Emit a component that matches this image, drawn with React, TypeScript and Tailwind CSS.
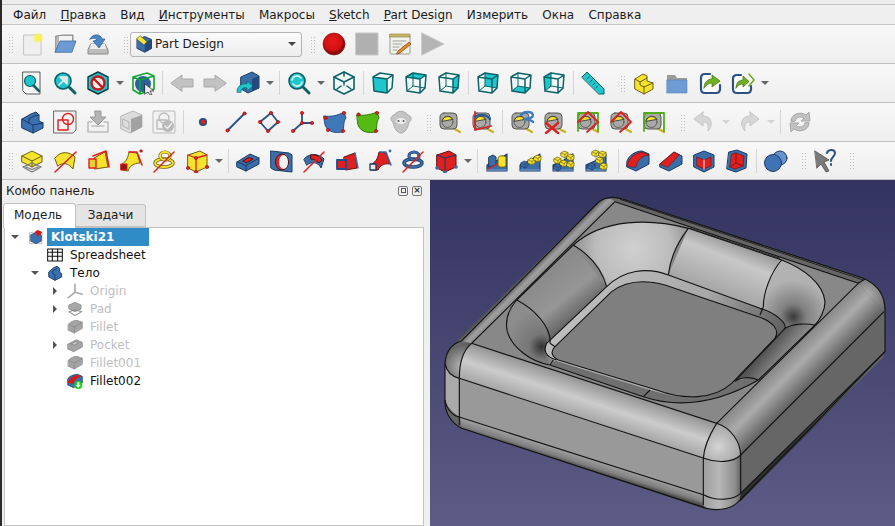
import type { ReactNode } from "react";

const BLUE = "#3a6ea8";
const BLUE_D = "#1c3a66";
const YEL = "#f5e32e";
const YEL_D = "#6b5f10";
const RED = "#e01f1f";
const TEAL = "#1fc6ce";
const TEAL_D = "#0c6266";

function Svg({ children, size = 24 }: { children: ReactNode; size?: number }) {
  return (
    <svg width={size} height={size} viewBox="0 0 24 24" strokeLinejoin="round" strokeLinecap="round">
      {children}
    </svg>
  );
}

const FACES: Record<string, string> = {
  front: "M2 6 L16 8 L16 22 L3 20 Z",
  top: "M2 6 L9 2 L22 4 L16 8 Z",
  right: "M16 8 L22 4 L21 17 L16 22 Z",
  rear: "M9 2 L22 4 L21 17 L9 15 Z",
  bottom: "M3 20 L9 15 L21 17 L16 22 Z",
  left: "M2 6 L9 2 L9 15 L3 20 Z",
};

// small wire box used by the standard views, "face" picks the filled side
function ViewCube({ face }: { face: string }) {
  const s = { stroke: TEAL_D, strokeWidth: 1.5, fill: "none" };
  if (face === "iso") {
    return (
      <Svg>
        <path d="M12 1 L22 6 L22 18 L12 23 L2 18 L2 6 Z" fill="#f4fbfb" stroke={TEAL_D} strokeWidth={1.6} />
        <path d="M2 6 L12 11 L22 6 M12 1 V5 M12 11 V14 M5 18 L9 15 M19 18 L15 15" fill="none" stroke={TEAL_D} strokeWidth={1.5} />
      </Svg>
    );
  }
  return (
    <Svg>
      <path d="M2 6 L9 2 L22 4 L21 17 L16 22 L3 20 Z" fill="#f1f9f9" stroke="none" />
      <path d={FACES[face]} fill={TEAL} />
      <path d="M2 6 L9 2 L22 4 L21 17 L16 22 L3 20 Z M2 6 L16 8 L22 4 M16 8 V22" {...s} />
      {face !== "front" && <path d="M9 2 V15 L3 20 M9 15 L21 17" {...s} strokeWidth={1} />}
    </Svg>
  );
}

function Glass({ children }: { children?: ReactNode }) {
  return (
    <Svg>
      <path d="M15 15 L22 22" stroke={TEAL_D} strokeWidth={3} />
      <circle cx="10" cy="10" r="8" fill={TEAL} stroke={TEAL_D} strokeWidth={1.6} />
      {children}
    </Svg>
  );
}

function Tape({ children }: { children?: ReactNode }) {
  return (
    <Svg>
      <path d="M15 18 L22 22" stroke="#c9b320" strokeWidth={2.4} />
      <rect x="2" y="3" width="17" height="16" rx="4" fill="#a9a9a6" stroke="#555" strokeWidth={1} />
      <path d="M4 11 A6 6 0 0 1 15 9 Z" fill={YEL} stroke="#333" strokeWidth={0.8} />
      <circle cx="9.5" cy="12" r="5.5" fill="none" stroke="#444" strokeWidth={0.7} />
      {children}
    </Svg>
  );
}

function SheetPart({ children }: { children: ReactNode }) {
  return (
    <Svg>
      <path d="M2 16 L13 11 L22 5 L22 22 L2 22 Z" fill={BLUE} stroke={BLUE_D} strokeWidth={1.1} />
      <path d="M2 21 L22 21" stroke="#7fa4cf" strokeWidth={1} />
      {children}
    </Svg>
  );
}

function Cube2({ x, y, f = YEL, d = YEL_D }: { x: number; y: number; f?: string; d?: string }) {
  return (
    <g transform={`translate(${x} ${y})`}>
      <path d="M0 2 L3 0 L7 1.5 L7 5 L4 7 L0 5 Z" fill={f} stroke={d} strokeWidth={0.7} />
      <path d="M0 2 L4 3.5 L7 1.5 M4 3.5 L4 7" fill="none" stroke={d} strokeWidth={0.6} />
    </g>
  );
}

const redDot = (cx: number, cy: number, r = 1.7) => <circle cx={cx} cy={cy} r={r} fill={RED} stroke="#8a1010" strokeWidth={0.5} />;

const ICONS: Record<string, ReactNode> = {
  new: (
    <Svg>
      <defs>
        <radialGradient id="glow"><stop offset="0.35" stopColor="#fdf24a" /><stop offset="1" stopColor="#fdf24a" stopOpacity="0" /></radialGradient>
      </defs>
      <rect x="4" y="3" width="17" height="20" fill="#efefef" stroke="#c4c4c4" />
      <circle cx="18" cy="6" r="6" fill="url(#glow)" />
    </Svg>
  ),
  open: (
    <Svg>
      <path d="M3 4 L10 3 L20 3 L20 11 L3 20 Z" fill="#b9b9b7" stroke="#666" strokeWidth={0.7} />
      <rect x="6" y="4" width="13" height="8" fill="#f2f2f2" />
      <path d="M2 20 L7 9 L23 9 L19 20 Z" fill="#6a9bd6" stroke="#44699b" strokeWidth={0.8} />
    </Svg>
  ),
  save: (
    <Svg>
      <path d="M5 12 L19 12 L22 18 L22 22 L2 22 L2 18 Z" fill="#bdbdbb" stroke="#8a8a8a" />
      <path d="M5 12 L19 12 L20 17 L4 17 Z" fill="#ececec" />
      <path d="M4 7 C7 1 15 2 16 7 L19 7 L13 16 L7 9 L11 8 C10 6 7 6 4 7 Z" fill="#4a86c4" stroke="#28598f" strokeWidth={0.7} />
    </Svg>
  ),
  wb: (
    <Svg size={18}>
      <path d="M3 6 L13 2 L22 6 L22 18 L13 23 L3 18 Z" fill={BLUE} stroke={BLUE_D} strokeWidth={1.2} />
      <path d="M13 10 L22 6 L22 18 L13 23 Z" fill="#23497d" />
      <path d="M2 5 L7 1 L16 9 L12 13 Z" fill={YEL} stroke="#444" strokeWidth={0.8} />
    </Svg>
  ),
  record: (
    <Svg>
      <defs>
        <radialGradient id="rec" cx="0.45" cy="0.4"><stop offset="0" stopColor="#e81c1c" /><stop offset="0.8" stopColor="#d10f0f" /><stop offset="1" stopColor="#8e0a0a" /></radialGradient>
      </defs>
      <circle cx="12" cy="12" r="11" fill="url(#rec)" stroke="#8a1111" strokeWidth={0.6} />
    </Svg>
  ),
  stop: (
    <Svg>
      <rect x="1" y="1" width="22" height="22" fill="#b0b0b0" stroke="#c8c8c8" strokeWidth={1} />
    </Svg>
  ),
  macro: (
    <Svg>
      <rect x="2" y="3" width="20" height="19" rx="1" fill="#f3f3ee" stroke="#9a9a90" />
      <rect x="2" y="2" width="20" height="3" fill="#c8b56a" stroke="#8a7b3c" strokeWidth={0.6} />
      <path d="M5 9 H18 M5 12 H14 M5 15 H11 M5 18 H9" stroke="#9c9c9c" strokeWidth={1} />
      <path d="M10 19 L21 10 L23 12 L12 21 L9 22 Z" fill="#e58a22" stroke="#7a4110" strokeWidth={0.7} />
    </Svg>
  ),
  play: (
    <Svg>
      <path d="M1 1 L23 12 L1 23 Z" fill="#b4b4b4" stroke="#c8c8c8" strokeWidth={1} />
    </Svg>
  ),
  fitall: (
    <Svg>
      <path d="M3 1 H20 V23 H6 L3 20 Z" fill="#f6f6f6" stroke="#333" strokeWidth={0.8} />
      <path d="M13 14 L19 20" stroke={TEAL_D} strokeWidth={2.6} />
      <circle cx="10" cy="10" r="5.5" fill={TEAL} stroke={TEAL_D} strokeWidth={1.2} />
    </Svg>
  ),
  fitsel: (
    <Glass>
      <path d="M6 14 L11 9 M7 6 L14 6 L14 13 Z" stroke="#eee" strokeWidth={1.6} fill="#ddd" />
    </Glass>
  ),
  style: (
    <Svg>
      <path d="M12 1 L22 6 L22 18 L12 23 L2 18 L2 6 Z" fill={TEAL} stroke="#0b3c40" strokeWidth={1.4} />
      <circle cx="12" cy="12" r="6.5" fill="#eee" stroke="#c31919" strokeWidth={2.4} />
      <path d="M7.5 7.5 L16.5 16.5" stroke="#c31919" strokeWidth={2.4} />
    </Svg>
  ),
  bbox: (
    <Svg>
      <circle cx="12" cy="13" r="8" fill="#2e5f9e" />
      <path d="M2 6 L16 2 L23 5 L23 18 L9 23 L2 19 Z M2 6 L9 9 L23 5 M9 9 V23" fill="none" stroke="#11a531" strokeWidth={1.6} />
      <path d="M14 13 L23 20 L19 20 L21 24 L19 24 L17 21 L14 23 Z" fill="#eee" stroke="#222" strokeWidth={0.7} />
    </Svg>
  ),
  back: (
    <Svg>
      <path d="M1 12 L12 4 L12 8 L23 8 L23 16 L12 16 L12 20 Z" fill="#c2c2c2" stroke="#a9a9a9" />
    </Svg>
  ),
  fwd: (
    <Svg>
      <path d="M23 12 L12 4 L12 8 L1 8 L1 16 L12 16 L12 20 Z" fill="#c2c2c2" stroke="#a9a9a9" />
    </Svg>
  ),
  syncview: (
    <Svg>
      <path d="M5 6 L16 1 L23 5 L23 17 L12 22 L5 18 Z" fill={BLUE} stroke={BLUE_D} />
      <path d="M16 8 L23 5 L23 17 L16 20 Z" fill="#23497d" />
      <path d="M1 21 C1 14 7 12 11 13 L11 10 L17 15 L11 20 L11 17 C7 16 5 18 5 21 Z" fill={TEAL} stroke={TEAL_D} strokeWidth={0.7} />
    </Svg>
  ),
  zoomrot: (
    <Glass>
      <path d="M5 9 A5 5 0 0 1 14 7 M15 11 A5 5 0 0 1 6 13" fill="none" stroke="#d8f3f4" strokeWidth={1.6} />
    </Glass>
  ),
  ruler: (
    <Svg>
      <path d="M1 6 L6 1 L23 18 L23 23 L18 23 Z" fill={TEAL} stroke={TEAL_D} />
      <path d="M6 8 L8 6 M9 11 L11 9 M12 14 L14 12 M15 17 L17 15" stroke={TEAL_D} />
    </Svg>
  ),
  yellowstep: (
    <Svg>
      <path d="M3 8 L11 3 L15 5 L15 10 L21 12 L21 18 L12 23 L3 18 Z" fill={YEL} stroke={YEL_D} />
      <path d="M3 8 L8 11 L15 7 M8 11 V14 L12 16 L21 12 M12 16 V23" fill="none" stroke={YEL_D} />
    </Svg>
  ),
  folder: (
    <Svg>
      <path d="M2 4 H10 L12 7 H22 V21 H2 Z" fill="#9a9a98" />
      <rect x="2" y="9" width="20" height="13" fill="#6e9bd3" stroke="#5a86bb" strokeWidth={0.6} />
    </Svg>
  ),
  link: (
    <Svg>
      <path d="M12 3 H7 Q3 3 3 7 V18 Q3 22 7 22 H18 Q22 22 22 18 V14" fill="#fff" stroke="#2a5285" strokeWidth={2.2} />
      <path d="M6 17 C6 11 10 8 14 8 L14 4 L22 10 L14 16 L14 12 C11 12 8 14 6 17 Z" fill="#6fb021" stroke="#3f6e10" strokeWidth={0.7} />
    </Svg>
  ),
  linkmore: (
    <Svg>
      <path d="M10 4 H6 Q2 4 2 8 V18 Q2 22 6 22 H16 Q20 22 20 18 V15" fill="#fff" stroke="#2a5285" strokeWidth={2.2} />
      <path d="M5 17 C5 12 8 9 12 9 L12 5 L18 10.5 L12 16 L12 13 C9 13 7 14 5 17 Z" fill="#6fb021" stroke="#3f6e10" strokeWidth={0.7} />
      <path d="M18 3 L23 9 L18 15" fill="none" stroke="#6fb021" strokeWidth={1.6} />
    </Svg>
  ),
  body: (
    <Svg>
      <path d="M2 9 L11 4 L16 2 L19 5 L19 11 L23 13 L23 18 L13 23 L2 18 Z" fill="#3a6fb0" stroke={BLUE_D} />
      <path d="M2 9 L9 13 L9 9 L14 6 L19 5 M9 13 L13 15 V23 M13 15 L23 13" fill="none" stroke={BLUE_D} />
    </Svg>
  ),
  sketch: (
    <Svg>
      <path d="M1 1 H23 V20 L20 23 H1 Z" fill="#f4f4f4" stroke="#444" strokeWidth={0.8} />
      <rect x="5" y="10" width="10" height="10" fill="none" stroke={RED} strokeWidth={1.4} />
      <circle cx="15" cy="9" r="5.5" fill="none" stroke={RED} strokeWidth={1.4} />
    </Svg>
  ),
  attach: (
    <Svg>
      <path d="M9 1 H15 V7 H20 L12 15 L4 7 H9 Z" fill="#b4b4b4" stroke="#999" />
      <path d="M2 12 H6 M18 12 H22 V22 H2 V12 M6 16 H18" fill="none" stroke="#bdbdbd" strokeWidth={1.6} />
    </Svg>
  ),
  graycube: (
    <Svg>
      <path d="M2 6 L14 1 L23 5 L23 17 L11 23 L2 19 Z" fill="#dcdcdc" stroke="#b9b9b9" />
      <path d="M12 9 L23 5 L23 17 L12 23 Z" fill="#a2a2a2" />
      <path d="M4 9 L10 12 L10 19 L4 16 Z" fill="none" stroke="#b2b2b2" />
    </Svg>
  ),
  graylock: (
    <Svg>
      <rect x="1" y="1" width="22" height="22" rx="1" fill="#f2f2f2" stroke="#bbb" />
      <circle cx="12" cy="8" r="5" fill="none" stroke="#bbb" strokeWidth={1.4} />
      <rect x="5" y="10" width="10" height="9" fill="none" stroke="#bbb" strokeWidth={1.4} />
      <circle cx="16" cy="16" r="6" fill="#b9b9b9" />
      <path d="M13 16 L15.5 18.5 L19.5 13.5" fill="none" stroke="#eee" strokeWidth={1.4} />
    </Svg>
  ),
  point: (
    <Svg>
      <circle cx="12" cy="12" r="3.2" fill={RED} stroke="#234e86" strokeWidth={1.8} />
    </Svg>
  ),
  line: (
    <Svg>
      <path d="M3 21 L21 3" stroke="#2a5285" strokeWidth={2} />
      {redDot(3.5, 20.5)}
      {redDot(20.5, 3.5)}
    </Svg>
  ),
  rect: (
    <Svg>
      <path d="M3 12 L11 21 L21 12 L14 3 Z" fill="none" stroke="#2a5285" strokeWidth={1.8} />
      {[[3, 12], [11, 21], [21, 12], [14, 3]].map(([x, y]) => <g key={x}>{redDot(x, y)}</g>)}
    </Svg>
  ),
  axes: (
    <Svg>
      <path d="M12 3 V13 L3 21 M12 13 L22 13" fill="none" stroke="#2a5285" strokeWidth={1.8} />
      {[[12, 3], [12, 13], [3, 21], [22, 13]].map(([x, y]) => <g key={y + x}>{redDot(x, y)}</g>)}
    </Svg>
  ),
  plane: (
    <Svg>
      <path d="M1 6 C7 7 14 6 21 2 L23 8 C20 12 21 18 20 22 C13 23 5 23 2 15 Z" fill="#3f78b8" stroke="#2a5285" />
      {redDot(2.5, 8)}
      {redDot(21, 3)}
      {redDot(20, 21)}
      {redDot(5, 20)}
    </Svg>
  ),
  planegreen: (
    <Svg>
      <path d="M1 5 C7 6 14 5 21 2 L23 8 C20 12 21 18 20 22 C13 23 5 23 2 15 Z" fill="#55bb12" stroke="#2d7b06" />
      {redDot(2.5, 4.5)}
      {redDot(21, 3)}
      {redDot(20, 21)}
    </Svg>
  ),
  sheep: (
    <Svg>
      <path d="M5 5 C9 0 15 0 19 5 C23 6 23 11 20 12 C19 18 16 23 12 23 C8 23 5 18 4 12 C1 11 1 6 5 5 Z" fill="#c4c4c4" stroke="#aaa" />
      <ellipse cx="12" cy="11" rx="5" ry="3" fill="#eeeeee" />
      <circle cx="9.5" cy="11" r="1" fill="#555" />
      <circle cx="14.5" cy="11" r="1" fill="#555" />
    </Svg>
  ),
  tape0: <Tape />,
  tape1: (
    <Tape>
      <path d="M4 2 V20 L20 16" fill="none" stroke={RED} strokeWidth={1.8} />
      <path d="M4 7 A10 9 0 0 1 19 9" fill="none" stroke="#2a5c9c" strokeWidth={2.2} />
    </Tape>
  ),
  tape2: (
    <Tape>
      <path d="M11 5 C14 1 22 1 23 5 C23 9 18 8 15 9 C18 10 22 10 23 12" fill="none" stroke="#3d7cc0" strokeWidth={2.4} />
    </Tape>
  ),
  tape3: (
    <Tape>
      <path d="M3 13 L15 23 M15 13 L3 23" stroke={RED} strokeWidth={2.4} />
    </Tape>
  ),
  tape4: (
    <Tape>
      <path d="M2 21 V3 H22 V21" fill="none" stroke="#4eae1a" strokeWidth={1.8} />
      <path d="M2 12 L12 2 L22 12 L11 22" fill="none" stroke={RED} strokeWidth={1.8} />
    </Tape>
  ),
  tape5: (
    <Tape>
      <path d="M2 12 L12 2 L22 12 L11 22" fill="none" stroke={RED} strokeWidth={1.8} />
    </Tape>
  ),
  tape6: (
    <Tape>
      <path d="M2 21 V3 H22 V21" fill="none" stroke="#4eae1a" strokeWidth={1.8} />
    </Tape>
  ),
  undo: (
    <Svg>
      <path d="M11 2 L2 9 L11 16 L11 12 C15 12 17 14 16 21 C21 16 21 6 11 6 Z" fill="#d6d6d6" stroke="#c6c6c6" />
    </Svg>
  ),
  redo: (
    <Svg>
      <path d="M13 2 L22 9 L13 16 L13 12 C9 12 7 14 8 21 C3 16 3 6 13 6 Z" fill="#d6d6d6" stroke="#c6c6c6" />
    </Svg>
  ),
  refresh: (
    <Svg>
      <path d="M3 11 C3 4 12 1 18 5 L21 2 L22 11 L13 11 L16 8 C12 6 8 7 7 11 Z" fill="#c2c2c2" stroke="#a8a8a8" />
      <path d="M21 13 C21 20 12 23 6 19 L3 22 L2 13 L11 13 L8 16 C12 18 16 17 17 13 Z" fill="#c2c2c2" stroke="#a8a8a8" />
    </Svg>
  ),
  pad: (
    <Svg>
      <path d="M2 7 L12 2 L22 7 L22 13 L12 18 L2 13 Z" fill={YEL} stroke={YEL_D} />
      <path d="M2 7 L12 12 L22 7 M12 12 V18" fill="none" stroke={YEL_D} />
      <path d="M3 18 L12 14 L21 18 L12 23 Z M6 18 L12 20.5 L18 18" fill="none" stroke="#777" strokeWidth={1.2} />
    </Svg>
  ),
  rev: (
    <Svg>
      <path d="M2 9 C8 1 17 3 22 8 L20 20 C16 14 9 13 5 17 Z" fill={YEL} stroke={YEL_D} />
      <path d="M2 23 L23 3" stroke={RED} strokeWidth={1.5} />
    </Svg>
  ),
  loft: (
    <Svg>
      <path d="M8 9 L19 3 L22 18 L9 20 Z" fill={YEL} stroke={YEL_D} />
      <path d="M7 7 L20 2 L23 18" fill="none" stroke={RED} strokeWidth={1.6} />
      <rect x="3" y="10" width="7" height="9" fill="#e8d033" stroke={RED} strokeWidth={1.4} />
    </Svg>
  ),
  pipe: (
    <Svg>
      <path d="M3 15 C8 12 9 8 10 3 L18 4 L21 14 C14 14 10 18 9 22 L3 21 Z" fill={YEL} stroke={YEL_D} />
      <path d="M10 3 L18 3 L23 16" fill="none" stroke={RED} strokeWidth={1.5} />
      <rect x="2" y="15" width="6" height="6" fill="#8a1a1a" stroke={RED} />
      {redDot(22, 2, 1.3)}
    </Svg>
  ),
  helix: (
    <Svg>
      <ellipse cx="12" cy="14" rx="9" ry="4" fill="none" stroke={YEL_D} strokeWidth={3.4} />
      <ellipse cx="12" cy="14" rx="9" ry="4" fill="none" stroke={YEL} strokeWidth={2} />
      <ellipse cx="13" cy="7" rx="5" ry="4" fill="none" stroke={YEL_D} strokeWidth={3.2} />
      <ellipse cx="13" cy="7" rx="5" ry="4" fill="none" stroke={YEL} strokeWidth={2} />
      <path d="M2 23 L22 3" stroke={RED} strokeWidth={1.5} />
    </Svg>
  ),
  prim: (
    <Svg>
      <path d="M3 6 L15 2 L22 6 L22 18 L11 23 L3 19 Z" fill={YEL} stroke={YEL_D} />
      <path d="M11 9 L11 23 M3 6 L11 9 L22 6" fill="none" stroke={RED} strokeWidth={1.3} />
      {redDot(11, 9)}
      {redDot(3, 19)}
      {redDot(11, 23)}
      {redDot(22, 18)}
    </Svg>
  ),
  pocket: (
    <Svg>
      <path d="M1 13 L14 5 L23 9 L23 15 L10 22 L1 18 Z" fill={BLUE} stroke={BLUE_D} />
      <path d="M1 13 L10 16.5 L23 9 M10 16.5 V22" fill="none" stroke={BLUE_D} />
      <path d="M7 12 L13 8.5 L17 10 L11 13.5 Z" fill={RED} stroke="#5b0d0d" />
    </Svg>
  ),
  hole: (
    <Svg>
      <path d="M2 2 L20 4 L23 6 L23 23 L5 21 L2 19 Z" fill={BLUE} stroke={BLUE_D} />
      <ellipse cx="13" cy="13" rx="6.5" ry="8" fill="#d9262c" stroke="#5b0d0d" />
      <ellipse cx="14.5" cy="13" rx="4.5" ry="7" fill="#f4f4f4" />
    </Svg>
  ),
  groove: (
    <Svg>
      <path d="M2 10 C8 3 17 5 22 10 L19 19 C16 13 10 12 5 16 Z" fill={BLUE} stroke={BLUE_D} />
      <path d="M9 6 C13 5 17 7 20 11 L17 14 C14 11 12 10 9 10 Z" fill={RED} stroke="#5b0d0d" />
      <path d="M2 23 L22 3" stroke={RED} strokeWidth={1.5} />
    </Svg>
  ),
  subloft: (
    <Svg>
      <path d="M9 8 L20 4 L22 19 L11 21 Z" fill={RED} stroke="#6b0e0e" />
      <rect x="2" y="11" width="9" height="9" fill={RED} stroke="#1e4c8c" strokeWidth={1.8} />
      <path d="M20 4 L23 19" stroke={BLUE} strokeWidth={1.5} />
    </Svg>
  ),
  subpipe: (
    <Svg>
      <path d="M4 15 C9 12 10 8 11 3 L18 4 L22 15 C15 14 12 17 10 21 L4 21 Z" fill={RED} stroke="#6b0e0e" />
      <path d="M12 3 L18 3 L23 16" fill="none" stroke={BLUE} strokeWidth={1.5} />
      <rect x="2" y="15" width="6" height="6" fill="#e8e8e8" stroke={BLUE_D} strokeWidth={1.3} />
      <circle cx="22" cy="2" r="1.4" fill={BLUE} />
    </Svg>
  ),
  subhelix: (
    <Svg>
      <ellipse cx="12" cy="14" rx="9" ry="4" fill="none" stroke={BLUE_D} strokeWidth={3.4} />
      <ellipse cx="12" cy="14" rx="9" ry="4" fill="none" stroke={BLUE} strokeWidth={2} />
      <ellipse cx="13" cy="7" rx="5" ry="4" fill="none" stroke={BLUE_D} strokeWidth={3.2} />
      <ellipse cx="13" cy="7" rx="5" ry="4" fill="none" stroke={BLUE} strokeWidth={2} />
      <path d="M2 23 L22 3" stroke={RED} strokeWidth={1.5} />
    </Svg>
  ),
  subprim: (
    <Svg>
      <path d="M3 6 L15 2 L22 6 L22 18 L11 23 L3 19 Z" fill={RED} stroke="#6b0e0e" />
      <path d="M11 9 L11 23 M3 6 L11 9 L22 6" fill="none" stroke={BLUE_D} strokeWidth={1.1} />
      <circle cx="3" cy="19" r="1.8" fill={BLUE} />
      <circle cx="11" cy="23" r="1.8" fill={BLUE} />
      <circle cx="22" cy="18" r="1.8" fill={BLUE} />
    </Svg>
  ),
  mirror: (
    <SheetPart>
      <path d="M4 8 L8 6 L11 8 V16 L4 18 Z" fill={BLUE} stroke={BLUE_D} />
      <path d="M13 9 C13 6 21 6 21 9 V16 C21 19 13 19 13 16 Z" fill={YEL} stroke={YEL_D} />
      <path d="M3 20 L12 15" stroke={RED} strokeWidth={1.3} />
    </SheetPart>
  ),
  linpat: (
    <SheetPart>
      <Cube2 x={3} y={12} f={BLUE} d={BLUE_D} />
      <Cube2 x={10} y={9} />
      <Cube2 x={16} y={6} />
    </SheetPart>
  ),
  polpat: (
    <SheetPart>
      <Cube2 x={3} y={8} />
      <Cube2 x={10} y={2} />
      <Cube2 x={16} y={5} />
      <Cube2 x={9} y={11} />
      <Cube2 x={16} y={12} />
      <Cube2 x={3} y={15} f={BLUE} d={BLUE_D} />
    </SheetPart>
  ),
  multi: (
    <SheetPart>
      <Cube2 x={8} y={1} />
      <Cube2 x={15} y={2} />
      <Cube2 x={12} y={8} />
      <Cube2 x={16} y={14} />
      <Cube2 x={4} y={14} f={BLUE} d={BLUE_D} />
    </SheetPart>
  ),
  fillet: (
    <Svg>
      <path d="M1 12 C3 6 10 2 16 2 L23 5 L23 15 L10 22 L1 18 Z" fill={BLUE} stroke={BLUE_D} />
      <path d="M1 17 C2 10 8 4 16 3 L23 6 C16 7 11 11 10 18 Z" fill={RED} stroke="#6b0e0e" strokeWidth={0.6} />
    </Svg>
  ),
  chamfer: (
    <Svg>
      <path d="M1 15 L15 3 L23 7 L23 15 L10 22 L1 18 Z" fill={BLUE} stroke={BLUE_D} />
      <path d="M1 15 L15 3 L20 6 L9 18 Z" fill={RED} stroke="#6b0e0e" strokeWidth={0.6} />
    </Svg>
  ),
  draft: (
    <Svg>
      <path d="M2 6 L12 2 L22 6 L22 18 L12 23 L2 18 Z" fill={BLUE} stroke={BLUE_D} />
      <path d="M5 8 L12 11 L19 8 L19 17 L12 20 L5 17 Z" fill={RED} stroke="#6b0e0e" strokeWidth={0.6} />
      <path d="M12 11 V20" stroke="#f4f4f4" />
    </Svg>
  ),
  thick: (
    <Svg>
      <path d="M4 3 L12 1 L22 5 L21 19 L11 23 L2 20 Z" fill={BLUE} stroke={BLUE_D} />
      <path d="M7 5 L11 4 L19 7 L18 17 L10 20 L5 18 Z" fill={RED} stroke="#6b0e0e" strokeWidth={0.6} />
      <path d="M11 4 V14 L5 18 M11 14 L18 17" stroke="#8e1212" fill="none" />
    </Svg>
  ),
  boolean: (
    <Svg>
      <circle cx="16" cy="9" r="7" fill="#6693c9" stroke={BLUE_D} />
      <circle cx="9" cy="14" r="8.5" fill="#3f74b4" stroke={BLUE_D} />
    </Svg>
  ),
  help: (
    <Svg>
      <path d="M2 2 L16 11 L11 13 L16 22 L13 23 L8 15 L4 19 Z" fill="#7a7a7a" stroke="#444" strokeWidth={0.7} />
      <path d="M14 4 C15 0 22 0 22 4 C22 8 18 8 18 12 M18 15 V16" fill="none" stroke="#2a5285" strokeWidth={2} />
    </Svg>
  ),
  spreadsheet: (
    <Svg size={16}>
      <path d="M1 3 H23 V21 H1 Z M1 8 H23 M1 14 H23 M8 3 V21 M16 3 V21" fill="#fff" stroke="#111" strokeWidth={1.6} />
    </Svg>
  ),
  origin: (
    <Svg size={16}>
      <path d="M12 2 V14 L2 22 M12 14 L23 17" fill="none" stroke="#a9a9a9" strokeWidth={2.4} />
    </Svg>
  ),
  partgray: (
    <Svg size={16}>
      <path d="M2 8 C6 4 10 2 15 2 L23 5 V14 L11 21 L2 17 Z" fill="#a4a4a4" stroke="#858585" />
      <path d="M2 8 L11 12 L23 5 M11 12 V21" fill="none" stroke="#858585" />
    </Svg>
  ),
  padgray: (
    <Svg size={16}>
      <path d="M3 6 L12 2 L21 6 V12 L12 16 L3 12 Z" fill="#a8a8a8" stroke="#7e7e7e" />
      <path d="M3 16 L12 13 L22 16 L12 22 Z" fill="none" stroke="#8a8a8a" strokeWidth={1.6} />
    </Svg>
  ),
  pocketgray: (
    <Svg size={16}>
      <path d="M1 11 L14 4 L23 8 V15 L10 22 L1 18 Z" fill="#a4a4a4" stroke="#808080" />
      <path d="M7 10 L13 7 L17 9 L11 12 Z" fill="#d0d0d0" stroke="#7a7a7a" />
    </Svg>
  ),
  filletred: (
    <Svg size={16}>
      <path d="M1 9 C3 5 10 2 16 2 L23 5 L23 15 L10 22 L1 18 Z" fill={BLUE} stroke={BLUE_D} />
      <path d="M1 15 C3 8 10 4 17 3 L23 5 C15 6 11 11 10 16 Z" fill="#d81818" />
      <circle cx="17" cy="18" r="6" fill="#1bd41b" />
      <path d="M15.5 14 H18.5 V18 H20.5 L17 22 L13.5 18 H15.5 Z" fill="#fff" />
    </Svg>
  ),
  bodytree: (
    <Svg size={16}>
      <path d="M3 10 L10 4 L15 2 L19 5 L19 11 L22 13 L22 18 L12 23 L3 18 Z" fill="#3a6fb0" stroke={BLUE_D} strokeWidth={1.4} />
      <path d="M9 13 L9 9 L14 6 M9 13 L12 15 V23" fill="none" stroke={BLUE_D} strokeWidth={1.2} />
    </Svg>
  ),
  parttree: (
    <Svg size={16}>
      <path d="M3 5 H21 V22 H3 Z" fill="#f0f0f0" stroke="#aaa" />
      <path d="M4 9 L12 5 L20 9 L20 18 L12 22 L4 18 Z" fill="#3a6fb0" stroke={BLUE_D} />
      <path d="M11 4 C13 1 19 1 21 6 L14 12 Z" fill="#d81818" />
    </Svg>
  ),
};

function Tool({ name }: { name: string }) {
  return <div className="flex h-full w-[33px] shrink-0 items-center justify-center">{ICONS[name]}</div>;
}

function Grip() {
  return (
    <div className="flex h-full w-[9px] shrink-0 items-center justify-center">
      <div className="h-[17px] w-[5px] bg-[radial-gradient(#bdbdbd_0.7px,transparent_0.9px)] bg-[length:3px_3px]" />
    </div>
  );
}

function Sep() {
  return (
    <div className="flex h-full w-[6px] shrink-0 items-center justify-center">
      <div className="h-[24px] w-px bg-[#d4d4d4]" />
    </div>
  );
}

function Caret({ dim }: { dim?: boolean }) {
  return (
    <div className="flex h-full w-[12px] shrink-0 items-center justify-center">
      <div
        className={`h-0 w-0 border-x-[4px] border-t-[4px] border-x-transparent ${dim ? "border-t-[#d4d4d4]" : "border-t-[#666666]"}`}
      />
    </div>
  );
}

const SPACERS: Record<string, string> = {
  _3: "w-[3px]",
  _6: "w-[6px]",
  _7: "w-[7px]",
  _8: "w-[8px]",
  _9: "w-[9px]",
};

// | grip, - separator, v caret, w dimmed caret, _n spacer, cube:x view cube, anything else an icon name
function Bar({ items, last }: { items: string; last?: boolean }) {
  return (
    <div
      className={`flex items-center border-b border-[#c0c0c0] bg-gradient-to-b from-[#f8f8f8] to-[#eeeeee] pl-[4px] ${last ? "h-[38px]" : "h-[39px]"}`}
    >
      {items.split(" ").map((it, i) => {
        if (it === "|") return <Grip key={i} />;
        if (it === "-") return <Sep key={i} />;
        if (it === "v") return <Caret key={i} />;
        if (it === "w") return <Caret key={i} dim />;
        if (SPACERS[it]) return <div key={i} className={`h-full shrink-0 ${SPACERS[it]}`} />;
        if (it.startsWith("cube:")) {
          return (
            <div key={i} className="flex h-full w-[33px] shrink-0 items-center justify-center">
              <ViewCube face={it.slice(5)} />
            </div>
          );
        }
        return <Tool key={i} name={it} />;
      })}
    </div>
  );
}

const MENU = [
  ["", "Файл"],
  ["П", "равка"],
  ["", "Вид"],
  ["И", "нструменты"],
  ["", "Макросы"],
  ["S", "ketch"],
  ["P", "art Design"],
  ["", "Измерить"],
  ["", "Окна"],
  ["", "Справка"],
];

const TREE = [
  { lvl: 1, arrow: "", icon: "spreadsheet", text: "Spreadsheet", gray: false },
  { lvl: 1, arrow: "down", icon: "bodytree", text: "Тело", gray: false },
  { lvl: 2, arrow: "right", icon: "origin", text: "Origin", gray: true },
  { lvl: 2, arrow: "right", icon: "padgray", text: "Pad", gray: true },
  { lvl: 2, arrow: "", icon: "partgray", text: "Fillet", gray: true },
  { lvl: 2, arrow: "right", icon: "pocketgray", text: "Pocket", gray: true },
  { lvl: 2, arrow: "", icon: "partgray", text: "Fillet001", gray: true },
  { lvl: 2, arrow: "", icon: "filletred", text: "Fillet002", gray: false },
];

function Arrow({ dir }: { dir: string }) {
  return (
    <div className="flex h-full w-[20px] shrink-0 items-center justify-center">
      {dir === "down" && <div className="h-0 w-0 border-x-[4px] border-t-[4px] border-x-transparent border-t-[#555555]" />}
      {dir === "right" && <div className="h-0 w-0 border-y-[4px] border-l-[4px] border-y-transparent border-l-[#555555]" />}
    </div>
  );
}

function Model() {
  const edge = { fill: "none", stroke: "#141414", strokeWidth: 3.4 };
  return (
    <svg className="block h-[346px] w-[465px]" viewBox="0 0 1395 1038">
      <defs>
        <linearGradient id="rimLeft" gradientUnits="userSpaceOnUse" x1="313" y1="250" x2="340" y2="277">
          <stop offset="0" stopColor="#484848" />
          <stop offset="0.6" stopColor="#a0a0a0" />
          <stop offset="1" stopColor="#8c8c8c" />
        </linearGradient>
        <linearGradient id="rimFront" gradientUnits="userSpaceOnUse" x1="500" y1="613" x2="465" y2="720">
          <stop offset="0" stopColor="#949494" />
          <stop offset="0.5" stopColor="#cccccc" />
          <stop offset="1" stopColor="#a4a4a4" />
        </linearGradient>
        <linearGradient id="rimRight" gradientUnits="userSpaceOnUse" x1="1050" y1="542" x2="1128" y2="620">
          <stop offset="0" stopColor="#868686" />
          <stop offset="0.45" stopColor="#ababab" />
          <stop offset="1" stopColor="#676767" />
        </linearGradient>
        <linearGradient id="lipFront" gradientUnits="userSpaceOnUse" x1="460" y1="829" x2="449" y2="864">
          <stop offset="0" stopColor="#a0a0a0" />
          <stop offset="0.6" stopColor="#808080" />
          <stop offset="1" stopColor="#404040" />
        </linearGradient>
        <linearGradient id="lipRight" gradientUnits="userSpaceOnUse" x1="1130" y1="720" x2="1150" y2="745">
          <stop offset="0" stopColor="#666666" />
          <stop offset="1" stopColor="#2e2e2e" />
        </linearGradient>
        <linearGradient id="wallBack" gradientUnits="userSpaceOnUse" x1="920" y1="190" x2="860" y2="345">
          <stop offset="0" stopColor="#9a9a9a" />
          <stop offset="0.3" stopColor="#c8c8c8" />
          <stop offset="1" stopColor="#a4a4a4" />
        </linearGradient>
        <linearGradient id="wallLeft" gradientUnits="userSpaceOnUse" x1="345" y1="280" x2="445" y2="405">
          <stop offset="0" stopColor="#8a8a8a" />
          <stop offset="0.6" stopColor="#969696" />
          <stop offset="1" stopColor="#666666" />
        </linearGradient>
        <linearGradient id="wallRight" gradientUnits="userSpaceOnUse" x1="985" y1="500" x2="1070" y2="570">
          <stop offset="0" stopColor="#3e3e3e" />
          <stop offset="0.6" stopColor="#7c7c7c" />
          <stop offset="1" stopColor="#9c9c9c" />
        </linearGradient>
        <linearGradient id="ring" gradientUnits="userSpaceOnUse" x1="450" y1="350" x2="1000" y2="620">
          <stop offset="0" stopColor="#bdbdbd" />
          <stop offset="0.55" stopColor="#a8a8a8" />
          <stop offset="1" stopColor="#5a5a5a" />
        </linearGradient>
        <radialGradient id="cornerBack" gradientUnits="userSpaceOnUse" cx="610" cy="205" r="190">
          <stop offset="0" stopColor="#d0d0d0" />
          <stop offset="0.6" stopColor="#bcbcbc" />
          <stop offset="1" stopColor="#8a8a8a" />
        </radialGradient>
        <radialGradient id="cornerRight" gradientUnits="userSpaceOnUse" cx="1090" cy="410" r="110">
          <stop offset="0" stopColor="#3a3a3a" />
          <stop offset="0.35" stopColor="#808080" />
          <stop offset="1" stopColor="#b2b2b2" />
        </radialGradient>
        <radialGradient id="cornerLeft" gradientUnits="userSpaceOnUse" cx="335" cy="500" r="110">
          <stop offset="0" stopColor="#333333" />
          <stop offset="0.35" stopColor="#777777" />
          <stop offset="1" stopColor="#8c8c8c" />
        </radialGradient>
        <radialGradient id="ballFront" gradientUnits="userSpaceOnUse" cx="865" cy="800" r="90">
          <stop offset="0" stopColor="#d4d4d4" />
          <stop offset="0.7" stopColor="#a8a8a8" />
          <stop offset="1" stopColor="#666666" />
        </radialGradient>
        <radialGradient id="ballLeft" gradientUnits="userSpaceOnUse" cx="100" cy="560" r="75">
          <stop offset="0" stopColor="#bcbcbc" />
          <stop offset="1" stopColor="#555555" />
        </radialGradient>
        <radialGradient id="ballRight" gradientUnits="userSpaceOnUse" cx="1310" cy="345" r="70">
          <stop offset="0" stopColor="#b0b0b0" />
          <stop offset="1" stopColor="#666666" />
        </radialGradient>
        <linearGradient id="foot" gradientUnits="userSpaceOnUse" x1="825" y1="0" x2="932" y2="0">
          <stop offset="0" stopColor="#a0a0a0" />
          <stop offset="0.4" stopColor="#b8b8b8" />
          <stop offset="0.85" stopColor="#8c8c8c" />
          <stop offset="1" stopColor="#606060" />
        </linearGradient>
      </defs>

      {/* body silhouette */}
      <path
        d="M500 72 C520 52 550 48 580 58 L1300 295 C1345 315 1368 350 1365 400 L1365 515 L930 960 C910 985 870 995 830 985 L95 745 C65 730 45 700 45 665 L45 550 C48 510 70 490 95 482 Z"
        fill="#666666"
      />
      {/* outer sides */}
      <path d="M90 595 L822 835 L822 945 L90 710 Z" fill="#999999" />
      <path d="M90 710 L822 945 L828 988 L95 745 C88 738 88 720 90 710 Z" fill="url(#lipFront)" />
      <path d="M930 825 L1365 395 L1365 515 L930 940 Z" fill="#666666" />
      <path d="M930 940 L1365 515 L1360 530 L930 965 Z" fill="url(#lipRight)" />
      {/* rim fillets */}
      <path d="M500 72 C520 52 540 50 555 65 L125 490 L95 482 C85 484 75 488 70 492 Z" fill="url(#rimLeft)" />
      <path d="M125 490 L860 730 C835 770 822 800 820 835 L88 595 C88 550 100 510 125 490 Z" fill="url(#rimFront)" />
      <path d="M860 730 L1285 310 L1360 395 L930 822 C925 780 900 745 860 730 Z" fill="url(#rimRight)" />
      {/* flat top */}
      <path d="M555 65 L1285 310 L860 730 L125 490 Z" fill="#888888" />
      {/* corner balls */}
      <path d="M860 730 C900 745 925 780 932 825 L932 945 C925 975 890 990 850 990 C835 990 825 985 820 975 L820 835 C822 800 835 770 860 730 Z" fill="url(#foot)" />
      <path d="M860 730 C905 745 930 785 932 825 C910 850 860 850 820 835 C822 800 835 770 860 730 Z" fill="url(#ballFront)" />
      <path d="M125 490 C100 510 88 550 88 595 C70 590 50 575 45 550 C48 510 70 490 125 490 Z" fill="url(#ballLeft)" />
      <path d="M45 560 C55 580 70 590 88 595 L88 710 C70 700 50 680 45 660 Z" fill="#aaaaaa" />
      <path d="M45 660 C55 690 70 705 90 712 L95 745 C65 730 45 700 45 660 Z" fill="#666666" />
      <path d="M1285 310 L1360 395 C1368 350 1345 315 1300 295 Z" fill="url(#ballRight)" />

      {/* bowl */}
      <path d="M775 145 L1055 240 L990 405 L715 285 Z" fill="url(#wallBack)" />
      <path d="M430 195 L260 360 L360 490 L530 320 Z" fill="url(#wallLeft)" />
      <path d="M430 195 C520 115 660 115 775 145 C740 190 720 240 715 285 C650 265 580 275 530 320 C515 265 480 225 430 195 Z" fill="url(#cornerBack)" />
      <path d="M1055 240 C1120 265 1180 310 1185 365 C1185 390 1170 420 1155 435 C1130 430 1090 430 1065 440 C1050 420 1020 400 990 405 C1000 340 1020 280 1055 240 Z" fill="url(#cornerRight)" />
      <path d="M260 360 C235 390 225 425 232 455 C245 500 300 545 360 555 L345 505 C365 480 350 420 260 360 Z" fill="url(#cornerLeft)" />
      <path d="M1155 435 L985 600 C950 590 930 595 915 610 L1065 445 C1090 430 1130 430 1155 435 Z" fill="url(#wallRight)" />
      <path d="M360 555 L640 650 C760 690 880 660 985 600 C950 590 925 600 905 615 C840 660 760 660 680 635 L380 540 Z" fill="#6f6f6f" />

      {/* inner fillet and floor */}
      <path d="M530 320 C580 270 650 260 715 285 L990 385 C1040 400 1070 430 1065 445 L915 610 C840 665 760 660 660 630 L370 540 C345 530 340 510 350 490 Z" fill="url(#ring)" />
      <path d="M545 335 C590 300 650 300 705 315 L985 410 C1030 425 1050 450 1035 475 L905 610 C850 660 760 660 680 630 L385 540 C365 530 360 515 375 500 Z" fill="#7f7f7f" />

      {/* edges */}
      <g {...edge}>
        <path d="M500 72 C520 52 550 48 580 58 L1300 295 C1345 315 1368 350 1365 400 L1365 515 L930 960 C910 985 870 995 830 985 L95 745 C65 730 45 700 45 665 L45 550 C48 510 70 490 95 482 Z" />
        <path d="M555 65 L1285 310 L860 730 L125 490 L555 65" />
        <path d="M570 58 L1300 300 M1050 235 L780 145" strokeWidth={2.4} />
        <path d="M125 490 C100 510 88 550 88 595 L88 735" />
        <path d="M45 550 C50 575 68 590 88 595 L822 835 C860 850 910 848 932 825 C930 785 905 745 860 730 C835 770 822 800 820 835 L820 975" />
        <path d="M45 660 C50 690 70 708 90 712 L822 945 C860 965 910 960 932 940 L932 825" />
        <path d="M932 825 L1362 395 M932 940 L1365 515" />
        <path d="M1285 310 L1305 297" />
        <path d="M260 360 L430 195 C520 115 660 115 775 145 L1055 240 C1120 265 1180 310 1185 365 C1185 390 1170 420 1155 435 L985 600" />
        <path d="M260 360 C235 390 225 425 232 455 C245 500 300 545 360 555 L640 650 C760 690 880 660 985 600" />
        <path d="M430 195 C480 225 515 265 530 320 M775 145 C740 190 720 240 715 285 M1055 240 C1020 280 1000 340 1000 380 L990 405 M260 360 C310 385 365 440 360 490" />
        <path d="M530 320 C580 270 650 260 715 285 L990 385 C1040 400 1070 430 1065 445 C1090 430 1130 430 1155 435" />
        <path d="M545 335 C590 300 650 300 705 315 L985 410 C1030 425 1050 450 1035 475 L905 610 C850 660 760 660 680 630 L385 540 C365 530 360 515 375 500 L545 335" />
        <path d="M530 320 L350 490 C340 510 345 530 380 540 M1065 445 L915 605 C930 590 960 590 985 600 M375 500 L360 490 M370 540 L360 555 M640 650 L660 630" />
      </g>
    </svg>
  );
}

export default function App() {
  return (
    <div className="flex h-[526px] w-[895px] flex-col overflow-hidden border-l-2 border-[#2a2a2a] bg-[#efefef] font-['DejaVu_Sans',sans-serif] text-[12px] text-[#1c1c1c]">
      <div className="h-[4px] bg-[#ececec]" />
      <div className="flex h-[21px] items-center border-y border-[#c4c4c4] bg-[#efefef] pl-[4px]">
        {MENU.map(([u, rest]) => (
          <div key={rest} className="whitespace-nowrap px-[7.1px]">
            {u && <span className="underline">{u}</span>}
            {rest}
          </div>
        ))}
      </div>

      <div className="flex h-[39px] items-center border-b border-[#c0c0c0] bg-gradient-to-b from-[#f8f8f8] to-[#eeeeee] pl-[4px]">
        <Grip />
        <Tool name="new" />
        <Tool name="open" />
        <Tool name="save" />
        <div className="ml-[7px]"><Grip /></div>
        <div className="flex h-[25px] w-[172px] shrink-0 items-center rounded-[3px] border border-[#b4b4b4] bg-gradient-to-b from-[#fbfbfb] to-[#ededed] pl-[4px]">
          <span className="mr-[2px] flex w-[18px] justify-center">{ICONS.wb}</span>
          <span>Part Design</span>
          <div className="ml-auto mr-[5px] h-0 w-0 border-x-[4px] border-t-[4px] border-x-transparent border-t-[#444444]" />
        </div>
        <div className="ml-[6px]"><Grip /></div>
        <Tool name="record" />
        <Tool name="stop" />
        <Tool name="macro" />
        <Tool name="play" />
      </div>

      <Bar items="| fitall fitsel style v bbox - back fwd syncview v - zoomrot v cube:iso - cube:front cube:top cube:right - cube:rear cube:bottom cube:left - ruler _9 | yellowstep folder link linkmore v" />
      <Bar items="| body sketch attach graycube graylock - point line rect axes plane planegreen sheep _7 | tape0 tape1 - tape2 tape3 tape4 tape5 tape6 _8 | undo w redo w - refresh" />
      <Bar last items="| pad rev loft pipe helix prim v - pocket hole groove subloft subpipe subhelix subprim v - mirror linpat polpat multi _3 - fillet chamfer draft thick - boolean _7 | help _6 |" />

      <div className="flex min-h-0 flex-1">
        <div className="flex w-[428px] shrink-0 flex-col pl-[1px]">
          <div className="flex h-[21px] shrink-0 items-center justify-between pl-[3px] pr-[8px]">
            <span>Комбо панель</span>
            <div className="flex gap-[4px]">
              <div className="flex h-[10px] w-[10px] items-center justify-center rounded-[2px] border border-[#777777]">
                <div className="h-[5px] w-[5px] border border-[#555555]" />
              </div>
              <div className="flex h-[10px] w-[10px] items-center justify-center rounded-[2px] border border-[#777777] text-[9px] font-bold leading-none text-[#333333]">
                ×
              </div>
            </div>
          </div>
          <div className="flex h-[26px] shrink-0 items-end">
            <div className="relative z-10 -mb-px flex h-[25px] w-[73px] items-center rounded-t-[3px] border border-b-0 border-[#c2c2c2] bg-white pb-[2px] pl-[10px]">
              Модель
            </div>
            <div className="flex h-[23px] w-[70px] items-center justify-center rounded-t-[3px] border border-l-0 border-[#c2c2c2] bg-[#e4e4e4] pb-[2px]">
              Задачи
            </div>
          </div>
          <div className="ml-[1px] mr-[6px] min-h-0 flex-1 border border-[#c2c2c2] bg-white">
            <div className="flex h-[18px] items-center">
              <Arrow dir="down" />
              <span className="ml-[3px] mr-[3px] w-4">{ICONS.parttree}</span>
              <span className="flex h-full w-[102px] items-center bg-[#308cc6] pl-[4px] font-bold text-white">Klotski21</span>
            </div>
            {TREE.map((row) => (
              <div key={row.text} className="flex h-[18px] items-center" style={{ paddingLeft: row.lvl * 20 }}>
                <Arrow dir={row.arrow} />
                <span className="ml-[2px] mr-[7px] w-4">{ICONS[row.icon]}</span>
                <span className={row.gray ? "text-[#bebebe]" : "text-[#111111]"}>{row.text}</span>
              </div>
            ))}
          </div>
        </div>
        <div className="min-w-0 flex-1 bg-gradient-to-b from-[#33335f] to-[#5c5c86]">
          <Model />
        </div>
      </div>
    </div>
  );
}
